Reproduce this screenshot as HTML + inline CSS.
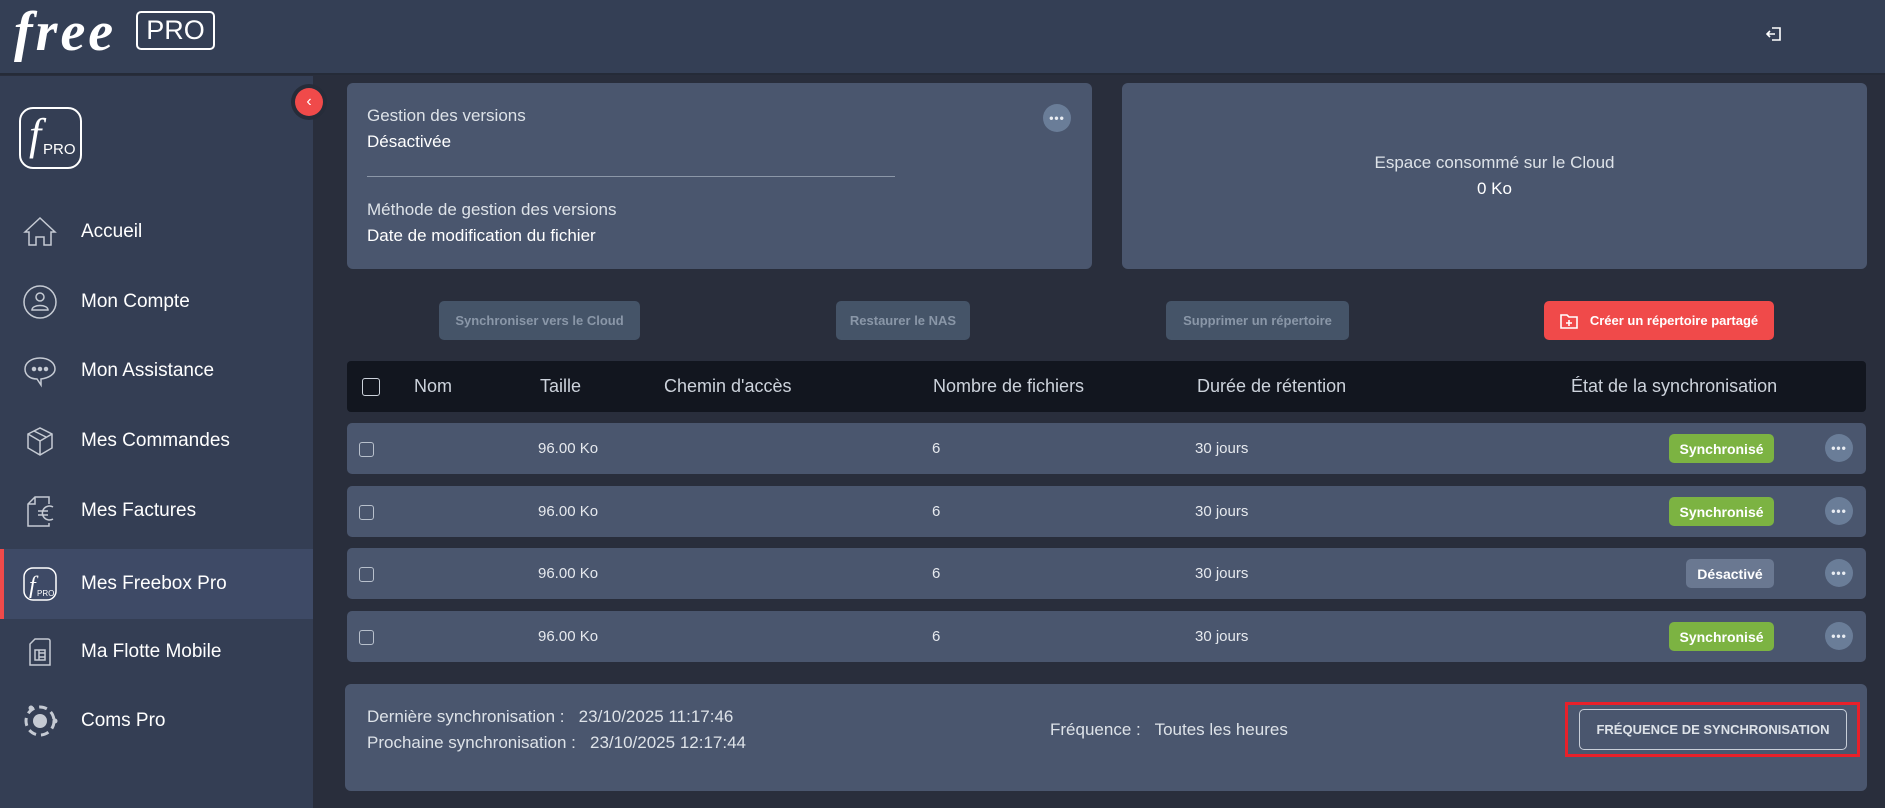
<!DOCTYPE html>
<html><head><meta charset="utf-8"><style>
*{box-sizing:border-box;margin:0;padding:0}
body{width:1885px;height:808px;overflow:hidden;background:#292e3c;font-family:"Liberation Sans",sans-serif;position:relative;color:#fff}
.a{position:absolute}
.top{left:0;top:0;width:1885px;height:75px;background:#343f55;border-bottom:2px solid #252b38}
.side{left:0;top:76px;width:313px;height:732px;background:#343e54}
.item{position:absolute;left:0;width:313px;height:70px;display:flex;align-items:center}
.item span{position:absolute;left:81px;font-size:19px;color:#fff}
.item svg{position:absolute;left:20px}
.card{background:#4a566e;border-radius:6px}
.btn{background:#455468;border-radius:5px;color:#8a97a8;font-size:13px;font-weight:bold;display:flex;align-items:center;justify-content:center}
.row{left:347px;width:1519px;height:51px;background:#4a566e;border-radius:5px}
.row .t{position:absolute;top:17px;font-size:15px;color:#e6e9ee}
.cb{position:absolute;width:15px;height:15px;border:1.5px solid #b8c0cc;border-radius:3px}
.badge{position:absolute;top:11px;height:29px;border-radius:5px;font-size:14px;font-weight:bold;display:flex;align-items:center;justify-content:center;color:#fff}
.dots{position:absolute;width:28px;height:28px;border-radius:50%;background:#6a7d98;color:#e8ecf2;font-size:12px;display:flex;align-items:center;justify-content:center;letter-spacing:1px;font-weight:bold}
.th{position:absolute;top:15px;font-size:18px;color:#cdd3dc}
</style></head><body>
<div class="a top">
 <div class="a" style="left:14px;top:0px;font-family:'Liberation Serif',serif;font-style:italic;font-weight:bold;font-size:56px;color:#fff;letter-spacing:3px">free</div>
 <div class="a" style="left:136px;top:11px;width:79px;height:39px;border:2.5px solid #fff;border-radius:5px;font-size:27px;text-align:center;line-height:34px;color:#fff">PRO</div>
 <svg class="a" style="left:1766px;top:26px" width="16" height="16" viewBox="0 0 16 16" fill="none" stroke="#fff" stroke-width="1.6"><path d="M6 2h8v12H6M1 8h8M4 5L1 8l3 3"/></svg>
</div>
<div class="a side">
 <div class="a" style="left:19px;top:31px;width:63px;height:62px;border:2.5px solid #fff;border-radius:14px">
  <span class="a" style="left:8px;top:0px;font-family:'Liberation Serif',serif;font-style:italic;font-size:44px">f</span>
  <span class="a" style="left:22px;top:32px;font-size:15px">PRO</span>
 </div>
 <div class="item" style="top:121px"><svg width="40" height="40" viewBox="0 0 40 40" fill="none" stroke="#c5cad3" stroke-width="1.5"><path d="M5 20L20 6l15 14h-4v13h-7v-8h-8v8H9V20z"/></svg><span>Accueil</span></div>
 <div class="item" style="top:191px"><svg width="40" height="40" viewBox="0 0 40 40" fill="none" stroke="#c5cad3" stroke-width="1.5"><circle cx="20" cy="20" r="16"/><circle cx="20" cy="15" r="4"/><path d="M12 28c0-6 16-6 16 0z"/></svg><span>Mon Compte</span></div>
 <div class="item" style="top:260px"><svg width="40" height="40" viewBox="0 0 40 40" fill="none" stroke="#c5cad3" stroke-width="1.5"><path d="M20 7C11 7 5 12 5 18s5 10 12 10l4 6v-6c8-1 14-5 14-10 0-6-6-11-15-11z"/><circle cx="14" cy="18" r="1.5" fill="#c5cad3"/><circle cx="20" cy="18" r="1.5" fill="#c5cad3"/><circle cx="26" cy="18" r="1.5" fill="#c5cad3"/></svg><span>Mon Assistance</span></div>
 <div class="item" style="top:330px"><svg width="40" height="40" viewBox="0 0 40 40" fill="none" stroke="#c5cad3" stroke-width="1.5"><path d="M8 13l12-6 12 6v14l-12 7-12-7zM8 13l12 7 12-7M20 20v14M14 10l12 6"/></svg><span>Mes Commandes</span></div>
 <div class="item" style="top:400px"><svg width="40" height="40" viewBox="0 0 40 40" fill="none" stroke="#c5cad3" stroke-width="1.5"><path d="M29 13V6H15l-7 7v22h21v-3M8 13h7V6"/><path d="M33 16a7 7 0 1 0 0 12M18 20h10M18 24h10"/></svg><span>Mes Factures</span></div>
 <div class="a" style="left:0;top:473px;width:313px;height:70px;background:#3e4a66"></div>
 <div class="a" style="left:0;top:473px;width:4px;height:70px;background:#f04a4a"></div>
 <div class="item" style="top:473px"><svg width="40" height="40" viewBox="0 0 40 40" fill="none" stroke="#fff" stroke-width="1.5"><rect x="4" y="4" width="32" height="32" rx="9"/><text x="9" y="29" font-family="Liberation Serif" font-style="italic" font-size="24" fill="#fff" stroke="none">f</text><text x="17" y="32" font-family="Liberation Sans" font-size="8" fill="#fff" stroke="none">PRO</text></svg><span>Mes Freebox Pro</span></div>
 <div class="item" style="top:541px"><svg width="40" height="40" viewBox="0 0 40 40" fill="none" stroke="#c5cad3" stroke-width="1.5"><path d="M15 7h13a2 2 0 0 1 2 2v24H10V12z"/><rect x="15" y="18" width="10" height="10"/><path d="M19 18v10M19 21h6M19 25h6"/></svg><span>Ma Flotte Mobile</span></div>
 <div class="item" style="top:610px"><svg width="40" height="40" viewBox="0 0 40 40" fill="#c5cad3" stroke="#c5cad3"><circle cx="20" cy="20" r="7" stroke="none"/><circle cx="20" cy="20" r="14" fill="none" stroke-width="3" stroke-dasharray="8 5"/><circle cx="11" cy="7" r="2.5" stroke="none"/><circle cx="35" cy="20" r="2.5" stroke="none"/></svg><span>Coms Pro</span></div>
</div>
<div class="a" style="left:291px;top:84px;width:36px;height:36px;border-radius:50%;background:#262c39"></div>
<div class="a" style="left:295px;top:88px;width:28px;height:28px;border-radius:50%;background:#f04a4a;color:#fff;font-size:16px;text-align:center;line-height:27px">‹</div>

<div class="a card" style="left:347px;top:83px;width:745px;height:186px">
 <div class="a" style="left:20px;top:23px;font-size:17px;color:#dde2e8">Gestion des versions</div>
 <div class="a" style="left:20px;top:49px;font-size:17px">Désactivée</div>
 <div class="a" style="left:20px;top:93px;width:528px;height:1px;background:#8c97a8"></div>
 <div class="a" style="left:20px;top:117px;font-size:17px;color:#dde2e8">Méthode de gestion des versions</div>
 <div class="a" style="left:20px;top:143px;font-size:17px">Date de modification du fichier</div>
 <div class="dots" style="left:696px;top:21px">•••</div>
</div>
<div class="a card" style="left:1122px;top:83px;width:745px;height:186px">
 <div class="a" style="left:0;width:745px;text-align:center;top:70px;font-size:17px;color:#dde2e8">Espace consommé sur le Cloud</div>
 <div class="a" style="left:0;width:745px;text-align:center;top:96px;font-size:17px">0 Ko</div>
</div>

<div class="a btn" style="left:439px;top:301px;width:201px;height:39px">Synchroniser vers le Cloud</div>
<div class="a btn" style="left:836px;top:301px;width:134px;height:39px">Restaurer le NAS</div>
<div class="a btn" style="left:1166px;top:301px;width:183px;height:39px">Supprimer un répertoire</div>
<div class="a btn" style="left:1544px;top:301px;width:230px;height:39px;background:#f04a4a;color:#fff">
 <svg width="18" height="16" viewBox="0 0 18 16" fill="none" stroke="#fff" stroke-width="1.6" style="margin-right:12px"><path d="M1 2h6l2 2h8v11H1z"/><path d="M9 7v6M6 10h6"/></svg>Créer un répertoire partagé</div>

<div class="a" style="left:347px;top:361px;width:1519px;height:51px;background:#12161f;border-radius:4px">
 <div class="cb" style="left:15px;top:17px;width:18px;height:18px;border-color:#cdd3dc"></div>
 <div class="th" style="left:67px">Nom</div>
 <div class="th" style="left:193px">Taille</div>
 <div class="th" style="left:317px">Chemin d'accès</div>
 <div class="th" style="left:586px">Nombre de fichiers</div>
 <div class="th" style="left:850px">Durée de rétention</div>
 <div class="th" style="left:1224px">État de la synchronisation</div>
</div>

<div class="a row" style="top:423px"><div class="cb" style="left:12px;top:19px"></div><div class="t" style="left:191px">96.00 Ko</div><div class="t" style="left:585px">6</div><div class="t" style="left:848px">30 jours</div><div class="badge" style="left:1322px;width:105px;background:#7cb342">Synchronisé</div><div class="dots" style="left:1478px;top:11px">•••</div></div>
<div class="a row" style="top:486px"><div class="cb" style="left:12px;top:19px"></div><div class="t" style="left:191px">96.00 Ko</div><div class="t" style="left:585px">6</div><div class="t" style="left:848px">30 jours</div><div class="badge" style="left:1322px;width:105px;background:#7cb342">Synchronisé</div><div class="dots" style="left:1478px;top:11px">•••</div></div>
<div class="a row" style="top:548px"><div class="cb" style="left:12px;top:19px"></div><div class="t" style="left:191px">96.00 Ko</div><div class="t" style="left:585px">6</div><div class="t" style="left:848px">30 jours</div><div class="badge" style="left:1339px;width:88px;background:#6a7891">Désactivé</div><div class="dots" style="left:1478px;top:11px">•••</div></div>
<div class="a row" style="top:611px"><div class="cb" style="left:12px;top:19px"></div><div class="t" style="left:191px">96.00 Ko</div><div class="t" style="left:585px">6</div><div class="t" style="left:848px">30 jours</div><div class="badge" style="left:1322px;width:105px;background:#7cb342">Synchronisé</div><div class="dots" style="left:1478px;top:11px">•••</div></div>

<div class="a card" style="left:345px;top:684px;width:1522px;height:107px">
 <div class="a" style="left:22px;top:23px;font-size:17px;color:#dde2e8;white-space:pre">Dernière synchronisation :   23/10/2025 11:17:46</div>
 <div class="a" style="left:22px;top:49px;font-size:17px;color:#dde2e8;white-space:pre">Prochaine synchronisation :   23/10/2025 12:17:44</div>
 <div class="a" style="left:705px;top:36px;font-size:17px;color:#dde2e8;white-space:pre">Fréquence :   Toutes les heures</div>
 <div class="a" style="left:1220px;top:18px;width:295px;height:55px;border:3px solid #e8202a"></div>
 <div class="a" style="left:1234px;top:25px;width:268px;height:41px;border:1.5px solid #c8ced8;border-radius:5px;font-size:13px;font-weight:bold;color:#dde2e8;display:flex;align-items:center;justify-content:center">FRÉQUENCE DE SYNCHRONISATION</div>
</div>
</body></html>
